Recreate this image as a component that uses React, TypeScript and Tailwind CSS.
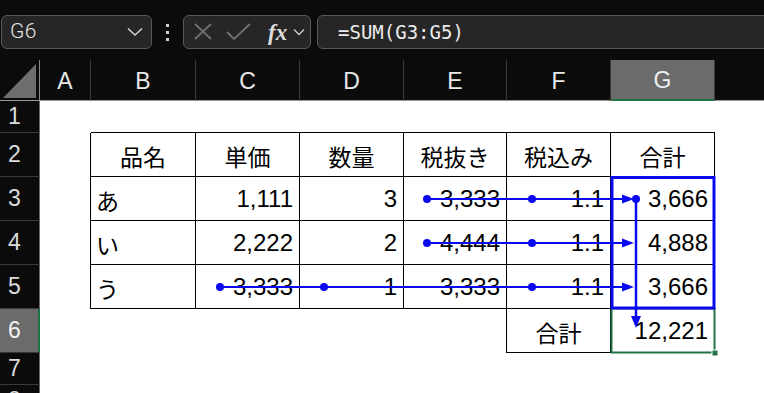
import React from "react";

const NUM = "font-['Liberation_Sans',Arial,sans-serif] text-[24px] text-black";
const JP = "font-['Noto_Sans_CJK_JP','Noto_Sans',sans-serif] text-[23px] text-black";

function ColHead({ label, active }: { label: string; active?: boolean }) {
  return (
    <div
      className={
        active
          ? "flex items-center justify-center bg-[#6b6b6b] border-r border-[#3a3a3a] border-b-2 border-b-[#217346] text-[23px] text-[#f0f0f0] font-['Liberation_Sans',sans-serif] pt-[2px]"
          : "flex items-center justify-center bg-[#0b0b0b] border-r border-[#3a3a3a] border-b border-b-[#9a9a9a] text-[23px] text-[#e8e8e8] font-['Liberation_Sans',sans-serif] pt-[2px]"
      }
    >
      {label}
    </div>
  );
}

function RowHead({ label, active }: { label: string; active?: boolean }) {
  return (
    <div
      className={
        active
          ? "flex items-center pl-[8px] bg-[#6b6b6b] border-r-2 border-r-[#217346] border-b border-[#3a3a3a] text-[23px] text-[#f0f0f0] font-['Liberation_Sans',sans-serif]"
          : "flex items-center pl-[8px] bg-[#0b0b0b] border-r border-r-[#6a6a6a] border-b border-[#3a3a3a] text-[23px] text-[#dcdcdc] font-['Liberation_Sans',sans-serif]"
      }
    >
      {label}
    </div>
  );
}

export default function App() {
  const tb = "border-r border-b border-black bg-white";
  return (
    <div className="relative w-[764px] h-[393px] overflow-hidden bg-white">
      {/* formula bar */}
      <div className="h-[60px] bg-[#0b0b0b] flex items-start pt-[15px] pl-[1px]">
        <div className="w-[151px] h-[34px] rounded-[6px] border border-[#5a5a5a] bg-[#262626] flex items-center justify-between pl-[8px] pr-[8px]">
          <span className="font-['Roboto',sans-serif] font-light text-[21px] text-[#e6e6e6] tracking-[0.5px]">G6</span>
          <svg width="16" height="10" viewBox="0 0 16 10">
            <polyline points="1,1.5 8,8 15,1.5" fill="none" stroke="#d0d0d0" strokeWidth="1.6" />
          </svg>
        </div>
        <div className="w-[31px] h-[34px] flex flex-col items-center justify-center gap-[4px]">
          <div className="w-[3px] h-[3px] bg-[#cfcfcf]" />
          <div className="w-[3px] h-[3px] bg-[#cfcfcf]" />
          <div className="w-[3px] h-[3px] bg-[#cfcfcf]" />
        </div>
        <div className="w-[128px] h-[34px] rounded-[6px] border border-[#5a5a5a] bg-[#262626] flex items-center pl-[9px]">
          <svg width="20" height="18" viewBox="0 0 20 18">
            <line x1="2" y1="1" x2="18" y2="16" stroke="#707070" strokeWidth="1.8" />
            <line x1="18" y1="1" x2="2" y2="16" stroke="#707070" strokeWidth="1.8" />
          </svg>
          <svg width="26" height="18" viewBox="0 0 26 18" className="ml-[13px]">
            <polyline points="1,9 8,16 24,1" fill="none" stroke="#707070" strokeWidth="1.8" />
          </svg>
          <span className="ml-[16px] font-['Liberation_Serif',serif] italic font-bold text-[23px] text-[#dcdcdc] leading-none">fx</span>
          <svg width="12" height="8" viewBox="0 0 12 8" className="ml-[6px]">
            <polyline points="1,1.5 6,6.5 11,1.5" fill="none" stroke="#c8c8c8" strokeWidth="1.4" />
          </svg>
        </div>
        <div className="ml-[6px] flex-1 mr-[-12px] h-[34px] rounded-[6px] border border-[#5a5a5a] bg-[#262626] flex items-center pl-[20px]">
          <span className="font-['DejaVu_Sans_Mono',monospace] text-[19px] text-[#ececec]">=SUM(G3:G5)</span>
        </div>
      </div>

      {/* sheet */}
      <div className="grid grid-cols-[40px_51px_105px_104px_104px_103px_104px_104px_1fr] grid-rows-[41px_32px_44px_44px_44px_44px_44px_32px_32px]">
        {/* header row */}
        <div className="relative bg-[#0b0b0b] border-r border-r-[#8a8a8a] border-b border-b-[#9a9a9a]">
          <svg width="40" height="41" viewBox="0 0 40 41" className="absolute left-0 top-0">
            <polygon points="3,38 36,38 36,4" fill="#6e6e6e" />
          </svg>
        </div>
        <ColHead label="A" />
        <ColHead label="B" />
        <ColHead label="C" />
        <ColHead label="D" />
        <ColHead label="E" />
        <ColHead label="F" />
        <ColHead label="G" active />
        <div className="bg-[#0b0b0b] border-b border-b-[#9a9a9a]" />

        {/* row 1 */}
        <RowHead label="1" />
        <div />
        <div className="border-b border-black" />
        <div className="border-b border-black" />
        <div className="border-b border-black" />
        <div className="border-b border-black" />
        <div className="border-b border-black" />
        <div className="border-b border-black" />
        <div />

        {/* row 2 */}
        <RowHead label="2" />
        <div className="border-r border-black" />
        <div className={`${tb} flex items-center justify-center pt-[3px] ${JP}`}>品名</div>
        <div className={`${tb} flex items-center justify-center pt-[3px] ${JP}`}>単価</div>
        <div className={`${tb} flex items-center justify-center pt-[3px] ${JP}`}>数量</div>
        <div className={`${tb} flex items-center justify-center pt-[3px] ${JP}`}>税抜き</div>
        <div className={`${tb} flex items-center justify-center pt-[3px] ${JP}`}>税込み</div>
        <div className={`${tb} flex items-center justify-center pt-[3px] ${JP}`}>合計</div>
        <div />

        {/* row 3 */}
        <RowHead label="3" />
        <div className="border-r border-black" />
        <div className={`${tb} flex items-center pl-[5px] pt-[3px] ${JP}`}>あ</div>
        <div className={`${tb} flex items-center justify-end pr-[6px] ${NUM}`}>1,111</div>
        <div className={`${tb} flex items-center justify-end pr-[6px] ${NUM}`}>3</div>
        <div className={`${tb} flex items-center justify-end pr-[6px] ${NUM}`}>3,333</div>
        <div className={`${tb} flex items-center justify-end pr-[6px] ${NUM}`}>1.1</div>
        <div className={`${tb} flex items-center justify-end pr-[6px] ${NUM}`}>3,666</div>
        <div />

        {/* row 4 */}
        <RowHead label="4" />
        <div className="border-r border-black" />
        <div className={`${tb} flex items-center pl-[5px] pt-[3px] ${JP}`}>い</div>
        <div className={`${tb} flex items-center justify-end pr-[6px] ${NUM}`}>2,222</div>
        <div className={`${tb} flex items-center justify-end pr-[6px] ${NUM}`}>2</div>
        <div className={`${tb} flex items-center justify-end pr-[6px] ${NUM}`}>4,444</div>
        <div className={`${tb} flex items-center justify-end pr-[6px] ${NUM}`}>1.1</div>
        <div className={`${tb} flex items-center justify-end pr-[6px] ${NUM}`}>4,888</div>
        <div />

        {/* row 5 */}
        <RowHead label="5" />
        <div className="border-r border-black" />
        <div className={`${tb} flex items-center pl-[5px] pt-[3px] ${JP}`}>う</div>
        <div className={`${tb} flex items-center justify-end pr-[6px] ${NUM}`}>3,333</div>
        <div className={`${tb} flex items-center justify-end pr-[6px] ${NUM}`}>1</div>
        <div className={`${tb} flex items-center justify-end pr-[6px] ${NUM}`}>3,333</div>
        <div className={`${tb} flex items-center justify-end pr-[6px] ${NUM}`}>1.1</div>
        <div className={`${tb} flex items-center justify-end pr-[6px] ${NUM}`}>3,666</div>
        <div />

        {/* row 6 */}
        <RowHead label="6" active />
        <div />
        <div />
        <div />
        <div />
        <div className="border-r border-black" />
        <div className={`${tb} flex items-center justify-center pt-[3px] ${JP}`}>合計</div>
        <div className={`${tb} flex items-center justify-end pr-[6px] ${NUM}`}>12,221</div>
        <div />

        {/* row 7 */}
        <RowHead label="7" />
        <div />
        <div />
        <div />
        <div />
        <div />
        <div />
        <div />
        <div />

        {/* row 8 */}
        <RowHead label="8" />
        <div />
        <div />
        <div />
        <div />
        <div />
        <div />
        <div />
        <div />
      </div>

      {/* overlays: selection and trace arrows */}
      <svg width="764" height="393" viewBox="0 0 764 393" className="absolute left-0 top-0 pointer-events-none">
        {/* active cell G6 */}
        <rect x="611.5" y="308.5" width="103" height="44" fill="none" stroke="#217346" strokeWidth="2" />
        <rect x="712" y="350" width="6" height="6" fill="#217346" stroke="#ffffff" strokeWidth="1" />

        {/* precedent box G3:G5 */}
        <rect x="612" y="177.5" width="102" height="130.5" fill="none" stroke="#0a0af0" strokeWidth="3" />

        {/* row 3 */}
        <line x1="427" y1="199" x2="624" y2="199" stroke="#0a0af0" strokeWidth="2" />
        <circle cx="427" cy="199" r="4" fill="#0a0af0" />
        <circle cx="532" cy="199" r="4" fill="#0a0af0" />
        <polygon points="622,194.5 634,199 622,203.5" fill="#0a0af0" />
        <circle cx="636" cy="199" r="4" fill="#0a0af0" />

        {/* row 4 */}
        <line x1="427" y1="243" x2="624" y2="243" stroke="#0a0af0" strokeWidth="2" />
        <circle cx="427" cy="243" r="4" fill="#0a0af0" />
        <circle cx="532" cy="243" r="4" fill="#0a0af0" />
        <polygon points="622,238.5 634,243 622,247.5" fill="#0a0af0" />

        {/* row 5 */}
        <line x1="220" y1="287" x2="624" y2="287" stroke="#0a0af0" strokeWidth="2" />
        <circle cx="220" cy="287" r="4" fill="#0a0af0" />
        <circle cx="324" cy="287" r="4" fill="#0a0af0" />
        <circle cx="532" cy="287" r="4" fill="#0a0af0" />
        <polygon points="622,282.5 634,287 622,291.5" fill="#0a0af0" />

        {/* vertical to G6 */}
        <line x1="636" y1="199" x2="636" y2="318" stroke="#0a0af0" strokeWidth="2.5" />
        <polygon points="631,316 641,316 636,328" fill="#0a0af0" />
      </svg>
    </div>
  );
}
